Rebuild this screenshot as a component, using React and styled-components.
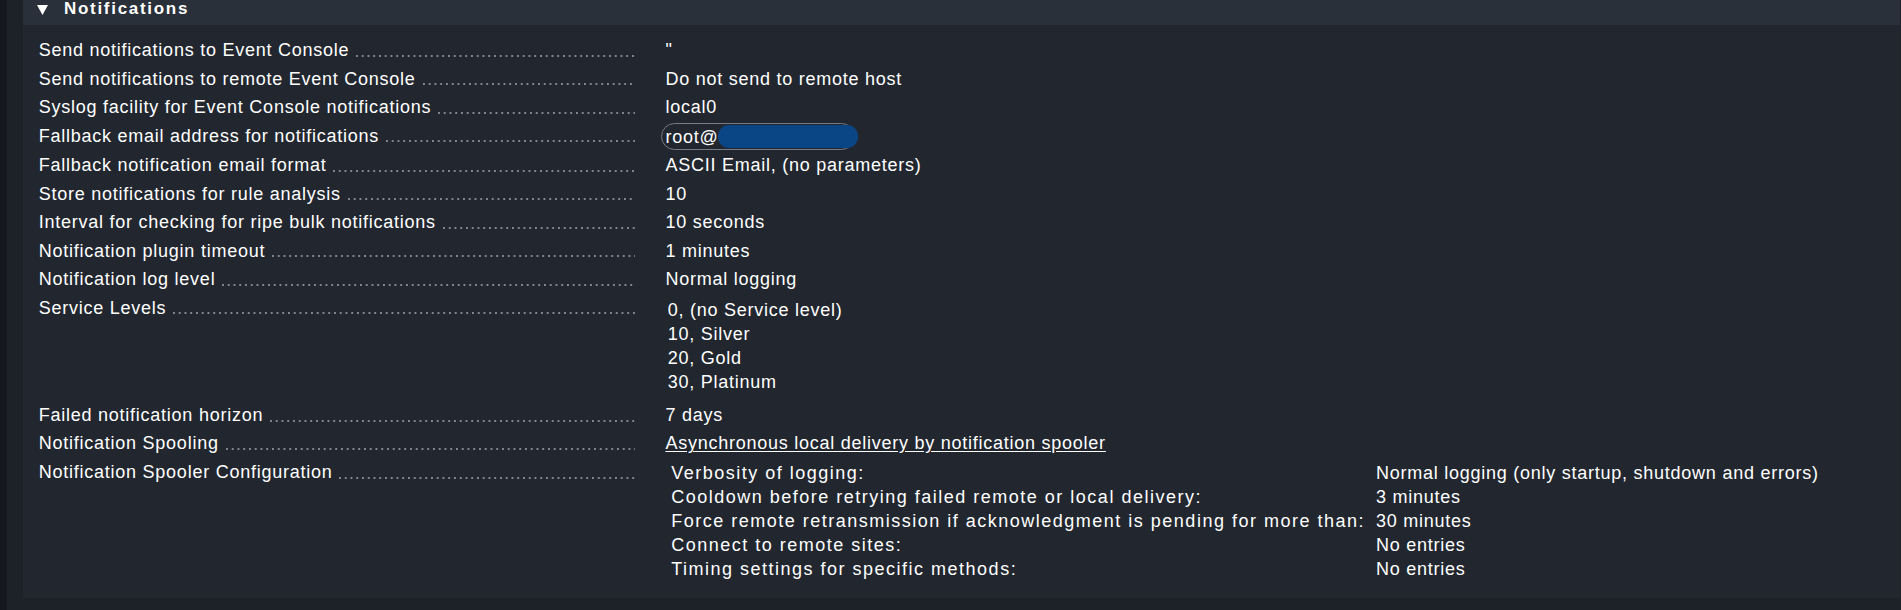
import React from 'react'
import styled, { createGlobalStyle } from 'styled-components'

const GlobalStyle = createGlobalStyle`
    html, body {
        margin: 0;
        padding: 0;
        background: #1d2128;
    }
    body {
        font-family: "Liberation Sans", Arial, sans-serif;
    }
`

const Page = styled.div`
    display: flex;
    min-height: 610px;
    background: #1d2128;
`

const SideEdge = styled.div`
    width: 7px;
    flex-shrink: 0;
    background: #15181c;
`

const Main = styled.main`
    flex: 1;
    padding: 0 1px 13px 15.5px;
`

const Panel = styled.section`
    background: #22272f;
`

const Header = styled.div`
    height: 25px;
    display: flex;
    align-items: flex-start;
    gap: 16px;
    padding-left: 14.5px;
    background: #29303a;
    color: #fff;
    font-size: 17px;
    font-weight: bold;
    line-height: 18px;
    letter-spacing: 1.7px;

    svg {
        margin-top: 5px;
        flex-shrink: 0;
    }
`

const Form = styled.div`
    display: grid;
    grid-template-columns: 596px 1fr;
    column-gap: 30.6px;
    row-gap: 4.5px;
    padding: 13px 16px 17.5px 16.3px;
    font-size: 18px;
    line-height: 24px;
    letter-spacing: 0.75px;
    color: #fff;
`

const Legend = styled.div`
    display: flex;
    align-items: flex-start;
    white-space: nowrap;
    overflow: hidden;
`

const Dots = styled.span`
    flex: 1;
    min-width: 0;
    height: 24px;
    margin-left: 7px;
    background-image: linear-gradient(to right, #80878f 0 1.6px, transparent 1.6px 5.75px);
    background-size: 5.75px 1.6px;
    background-repeat: repeat-x;
    background-position: 0 16.6px;
`

const Value = styled.div`
    white-space: nowrap;
`

const ServiceList = styled.div`
    padding: 2.5px 0 4.2px 2.4px;
`

const Link = styled.a`
    color: #fff;
    text-decoration: underline;
    text-underline-offset: 2px;
`

const EmailPill = styled.span`
    display: inline-flex;
    align-items: center;
    box-sizing: border-box;
    height: 27px;
    margin: -1.5px 0 -1.5px -4px;
    padding-left: 3px;
    border: 1px solid #767b84;
    border-radius: 14px;
    vertical-align: middle;
`

const Redacted = styled.span`
    display: inline-block;
    width: 140px;
    height: 23px;
    margin-right: -4px;
    border-radius: 11px;
    background: #0a4586;
`

const SpoolerTable = styled.div`
    display: grid;
    grid-template-columns: auto 1fr;
    column-gap: 11px;
    padding: 1px 0 0 5.8px;
`

const SpoolerKey = styled.div`
    letter-spacing: 1.5px;
`

const Row = ({ label, children }) => (
    <>
        <Legend>
            <span>{label}</span>
            <Dots />
        </Legend>
        <Value>{children}</Value>
    </>
)

const spooler = [
    ['Verbosity of logging:', 'Normal logging (only startup, shutdown and errors)'],
    ['Cooldown before retrying failed remote or local delivery:', '3 minutes'],
    ['Force remote retransmission if acknowledgment is pending for more than:', '30 minutes'],
    ['Connect to remote sites:', 'No entries'],
    ['Timing settings for specific methods:', 'No entries'],
]

export default function App() {
    return (
        <>
            <GlobalStyle />
            <Page>
                <SideEdge />
                <Main>
                    <Panel>
                        <Header>
                            <svg width="11" height="10" viewBox="0 0 11 10">
                                <path d="M0 0 H11 L5.5 10 Z" fill="#fff" />
                            </svg>
                            <span>Notifications</span>
                        </Header>
                        <Form>
                            <Row label="Send notifications to Event Console">"</Row>
                            <Row label="Send notifications to remote Event Console">Do not send to remote host</Row>
                            <Row label="Syslog facility for Event Console notifications">local0</Row>
                            <Row label="Fallback email address for notifications">
                                <EmailPill>
                                    root@
                                    <Redacted />
                                </EmailPill>
                            </Row>
                            <Row label="Fallback notification email format">ASCII Email, (no parameters)</Row>
                            <Row label="Store notifications for rule analysis">10</Row>
                            <Row label="Interval for checking for ripe bulk notifications">10 seconds</Row>
                            <Row label="Notification plugin timeout">1 minutes</Row>
                            <Row label="Notification log level">Normal logging</Row>
                            <Row label="Service Levels">
                                <ServiceList>
                                    <div>0, (no Service level)</div>
                                    <div>10, Silver</div>
                                    <div>20, Gold</div>
                                    <div>30, Platinum</div>
                                </ServiceList>
                            </Row>
                            <Row label="Failed notification horizon">7 days</Row>
                            <Row label="Notification Spooling">
                                <Link href="#">Asynchronous local delivery by notification spooler</Link>
                            </Row>
                            <Row label="Notification Spooler Configuration">
                                <SpoolerTable>
                                    {spooler.map(([k, v]) => (
                                        <React.Fragment key={k}>
                                            <SpoolerKey>{k}</SpoolerKey>
                                            <div>{v}</div>
                                        </React.Fragment>
                                    ))}
                                </SpoolerTable>
                            </Row>
                        </Form>
                    </Panel>
                </Main>
            </Page>
        </>
    )
}
